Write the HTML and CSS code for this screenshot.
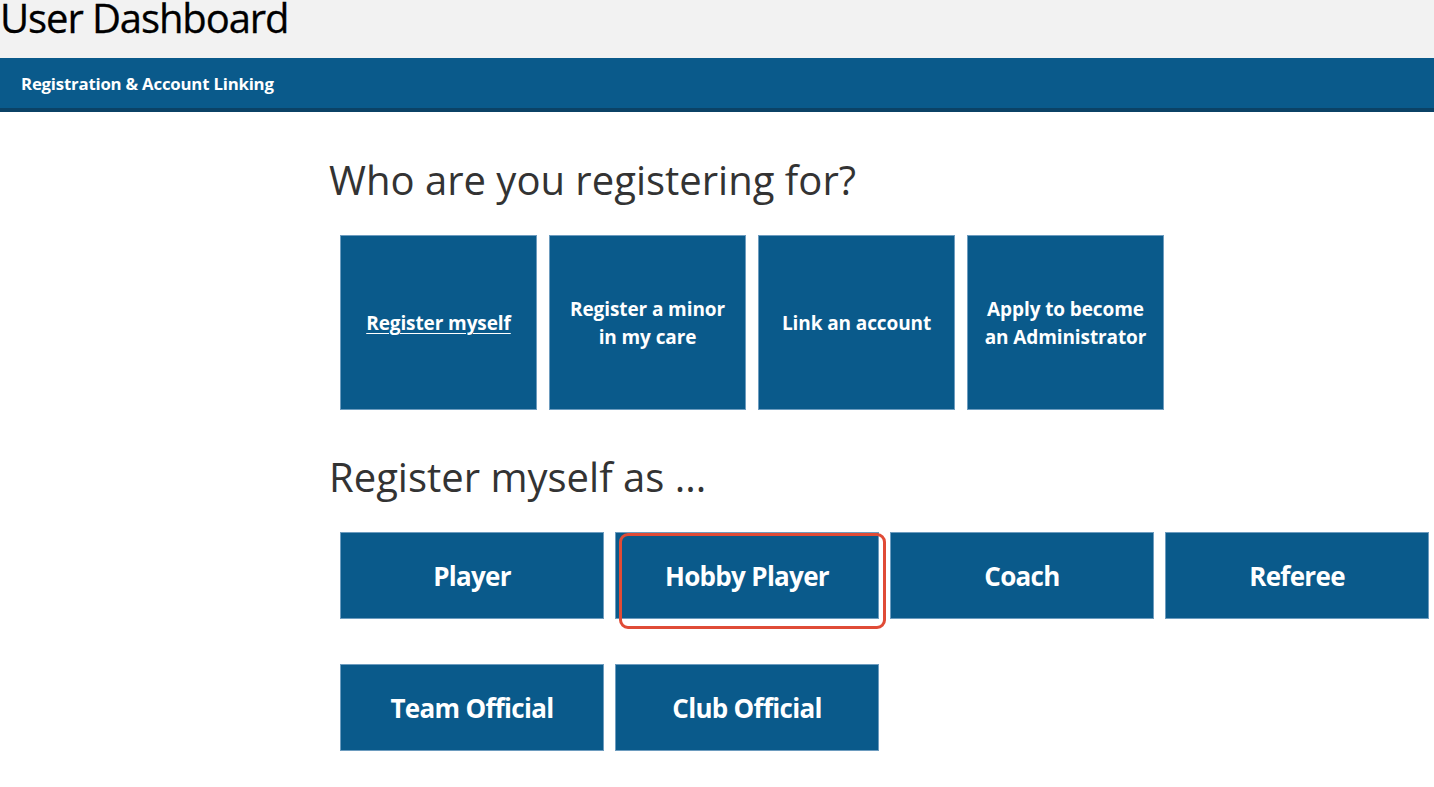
FILE: index.html
```html
<!DOCTYPE html>
<html>
<head>
<meta charset="utf-8">
<link rel="stylesheet" href="styles.css">
</head>
<body>
<header class="top">
  <h1 class="title">User Dashboard</h1>
</header>
<nav class="nav">
  <span class="nav-item">Registration &amp; Account Linking</span>
</nav>
<main class="main">
  <h2 class="heading">Who are you registering for?</h2>
  <div class="tiles">
    <a class="tile tile-link" href="#">Register myself</a>
    <div class="tile">Register a minor<br>in my care</div>
    <div class="tile">Link an account</div>
    <div class="tile">Apply to become<br>an Administrator</div>
  </div>
  <h2 class="heading heading-2">Register myself as ...</h2>
  <div class="roles">
    <div class="role">Player</div>
    <div class="role role-marked">Hobby Player<span class="mark"></span></div>
    <div class="role">Coach</div>
    <div class="role">Referee</div>
    <div class="role">Team Official</div>
    <div class="role">Club Official</div>
  </div>
</main>
</body>
</html>
```
FILE: styles.css
```css
html, body {
  margin: 0;
  padding: 0;
  background: #ffffff;
  font-family: "Open Sans", "Noto Sans", sans-serif;
}
.top {
  background: #f2f2f2;
  height: 58px;
  display: flex;
  align-items: flex-start;
}
.title {
  margin: 0;
  font-size: 40px;
  font-weight: 400;
  line-height: 36px;
  letter-spacing: -1.1px;
  color: #000;
  -webkit-text-stroke: 0.3px #000;
}
.nav {
  background: #0a5a8b;
  height: 50px;
  border-bottom: 4px solid #0b4266;
  display: flex;
  align-items: center;
  padding-left: 21px;
}
.nav-item {
  color: #fff;
  font-weight: 700;
  font-size: 16.8px;
  letter-spacing: -0.2px;
}
.main {
  padding-left: 340px;
  padding-top: 40px;
}
.heading {
  margin: 0 0 0 -11px;
  font-size: 40px;
  font-weight: 400;
  line-height: 56px;
  color: #333;
}
.tiles {
  display: flex;
  gap: 12px;
  margin-top: 27px;
}
.tile {
  width: 197px;
  height: 175px;
  box-sizing: border-box;
  background: #0a5a8b;
  border: 1px solid #6d9cbf;
  color: #fff;
  font-weight: 700;
  font-size: 19px;
  letter-spacing: -0.1px;
  line-height: 28px;
  display: flex;
  align-items: center;
  justify-content: center;
  text-align: center;
}
.tile-link {
  text-decoration: underline;
  text-underline-offset: 3px;
  text-decoration-thickness: 1px;
}
.heading-2 {
  margin-top: 39px;
}
.roles {
  display: grid;
  grid-template-columns: repeat(4, 264px);
  column-gap: 11px;
  row-gap: 45px;
  margin-top: 27px;
}
.role {
  position: relative;
  height: 87px;
  box-sizing: border-box;
  background: #0a5a8b;
  border: 1px solid #6d9cbf;
  color: #fff;
  font-weight: 700;
  font-size: 26px;
  letter-spacing: -0.7px;
  display: flex;
  align-items: center;
  justify-content: center;
}
.mark {
  position: absolute;
  left: 3px;
  top: 0px;
  width: 267px;
  height: 96px;
  box-sizing: border-box;
  border: 3px solid #e04b36;
  border-radius: 9px;
}
```
